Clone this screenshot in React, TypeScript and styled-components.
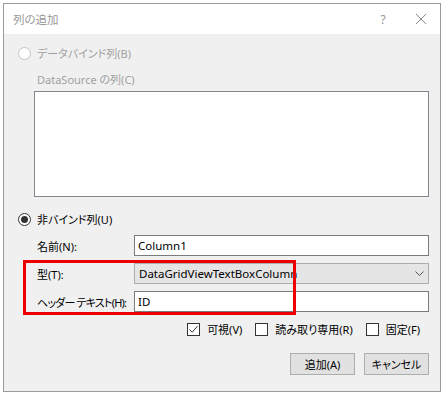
import React from 'react';
import styled, { createGlobalStyle } from 'styled-components';

const GlobalStyle = createGlobalStyle`
  html, body {
    margin: 0;
    padding: 0;
    background: #ffffff;
  }
  body {
    font-family: "Noto Sans", "Noto Sans CJK JP", sans-serif;
    font-size: 11px;
    font-feature-settings: "palt";
    color: #000;
  }
`;

const Screen = styled.div`
  width: 445px;
  height: 396px;
  padding: 3px 4px 4px 3px;
  box-sizing: border-box;
`;

const Window = styled.div`
  width: 438px;
  height: 389px;
  border: 1px solid #9a9a9a;
  box-sizing: border-box;
  display: flex;
  flex-direction: column;
  background: #f0f0f0;
`;

const TitleBar = styled.div`
  height: 30px;
  background: #ffffff;
  display: flex;
  align-items: center;
  padding-left: 9px;
  flex-shrink: 0;
`;

const Title = styled.div`
  flex: 1;
  color: #999999;
  font-size: 11.5px;
`;

const TitleButton = styled.div`
  width: 38px;
  height: 30px;
  display: flex;
  align-items: center;
  justify-content: center;
  color: #999999;
  font-size: 12px;
`;

const Body = styled.div`
  flex: 1;
  padding: 9px 14px 0 14px;
  display: flex;
  flex-direction: column;
`;

const RadioRow = styled.label<{ $disabled?: boolean; $gap?: number }>`
  display: flex;
  align-items: center;
  gap: 6px;
  height: 20px;
  margin-top: ${(p) => p.$gap ?? 0}px;
  color: ${(p) => (p.$disabled ? '#a0a0a0' : '#000')};
`;

const Radio = styled.span<{ $checked?: boolean; $disabled?: boolean }>`
  width: 13px;
  height: 13px;
  border-radius: 50%;
  box-sizing: border-box;
  border: 1px solid ${(p) => (p.$disabled ? '#c4c4c4' : '#333')};
  background: #fff;
  display: flex;
  align-items: center;
  justify-content: center;
  &::after {
    content: '';
    display: ${(p) => (p.$checked ? 'block' : 'none')};
    width: 7px;
    height: 7px;
    border-radius: 50%;
    background: #333;
  }
`;

const Indented = styled.div`
  padding-left: 19px;
  display: flex;
  flex-direction: column;
`;

const SubLabel = styled.div<{ $disabled?: boolean }>`
  height: 20px;
  display: flex;
  align-items: center;
  color: ${(p) => (p.$disabled ? '#a0a0a0' : '#000')};
  margin-top: 6px;
`;

const ListBox = styled.div`
  height: 106px;
  margin-right: -3px;
  margin-left: -3px;
  border: 1px solid #82878f;
  background: #fff;
  box-sizing: border-box;
  margin-top: 2px;
`;

const Form = styled.div`
  display: grid;
  grid-template-columns: 97px 1fr;
  row-gap: 7px;
  margin-right: -3px;
  margin-top: 6px;
`;

const HighlightGroup = styled.div`
  position: relative;
  display: grid;
  grid-template-columns: 97px 1fr;
  row-gap: 7px;
  grid-column: 1 / -1;
`;

const Highlight = styled.div`
  position: absolute;
  left: -14px;
  top: -3px;
  width: 273px;
  height: 55px;
  border: 3px solid #ee0000;
  box-sizing: border-box;
  pointer-events: none;
`;

const FieldLabel = styled.div<{ $tight?: boolean }>`
  height: 21px;
  display: flex;
  align-items: center;
  white-space: nowrap;
  letter-spacing: ${(p) => (p.$tight ? '-0.8px' : 'normal')};
`;

const TextBox = styled.div`
  height: 21px;
  border: 1px solid #7a7a7a;
  background: #fff;
  box-sizing: border-box;
  display: flex;
  align-items: center;
  padding-left: 3px;
  font-size: 11.5px;
`;

const Combo = styled.div`
  height: 21px;
  border: 1px solid #adadad;
  background: #e5e5e5;
  box-sizing: border-box;
  display: flex;
  align-items: center;
  padding-left: 4px;
  font-size: 11.5px;
`;

const ComboText = styled.span`
  flex: 1;
`;

const ComboArrow = styled.span`
  width: 18px;
  display: flex;
  align-items: center;
  justify-content: center;
`;

const CheckRow = styled.div`
  display: flex;
  justify-content: flex-end;
  align-items: center;
  gap: 13px;
  margin-top: 7px;
  margin-right: 6px;
  height: 20px;
`;

const CheckItem = styled.label`
  display: flex;
  align-items: center;
  gap: 7px;
`;

const Box = styled.span`
  width: 13px;
  height: 13px;
  border: 1px solid #333;
  background: #fff;
  box-sizing: border-box;
  display: flex;
  align-items: center;
  justify-content: center;
`;

const ButtonRow = styled.div`
  display: flex;
  justify-content: flex-end;
  gap: 9px;
  margin-top: 14px;
  margin-right: -3px;
`;

const Button = styled.button`
  width: 65px;
  height: 22px;
  border: 1px solid #adadad;
  background: #e1e1e1;
  font-family: inherit;
  font-feature-settings: "palt";
  font-size: 11px;
  color: #000;
  padding: 0;
`;

const Check = () => (
  <svg width="11" height="11" viewBox="0 0 11 11">
    <path d="M1.5 5.5 L4.2 8.2 L9.5 2.2" fill="none" stroke="#333" strokeWidth="1" />
  </svg>
);

const App = () => (
  <>
    <GlobalStyle />
    <Screen>
      <Window>
        <TitleBar>
          <Title>列の追加</Title>
          <TitleButton>?</TitleButton>
          <TitleButton>
            <svg width="12" height="12" viewBox="0 0 12 12">
              <path d="M1 1 L11 11 M11 1 L1 11" stroke="#888" strokeWidth="1" />
            </svg>
          </TitleButton>
        </TitleBar>
        <Body>
          <RadioRow $disabled>
            <Radio $disabled />
            データバインド列(B)
          </RadioRow>
          <Indented>
            <SubLabel $disabled>DataSource の列(C)</SubLabel>
            <ListBox />
          </Indented>
          <RadioRow $gap={12}>
            <Radio $checked />
            非バインド列(U)
          </RadioRow>
          <Indented>
            <Form>
              <FieldLabel>名前(N):</FieldLabel>
              <TextBox>Column1</TextBox>
              <HighlightGroup>
                <Highlight />
                <FieldLabel>型(T):</FieldLabel>
                <Combo>
                  <ComboText>DataGridViewTextBoxColumn</ComboText>
                  <ComboArrow>
                    <svg width="9" height="6" viewBox="0 0 9 6">
                      <path d="M0.5 0.5 L4.5 4.5 L8.5 0.5" fill="none" stroke="#555" strokeWidth="1" />
                    </svg>
                  </ComboArrow>
                </Combo>
                <FieldLabel $tight>ヘッダー テキスト(H):</FieldLabel>
                <TextBox>ID</TextBox>
              </HighlightGroup>
            </Form>
            <CheckRow>
              <CheckItem>
                <Box>
                  <Check />
                </Box>
                可視(V)
              </CheckItem>
              <CheckItem>
                <Box />
                読み取り専用(R)
              </CheckItem>
              <CheckItem>
                <Box />
                固定(F)
              </CheckItem>
            </CheckRow>
            <ButtonRow>
              <Button>追加(A)</Button>
              <Button>キャンセル</Button>
            </ButtonRow>
          </Indented>
        </Body>
      </Window>
    </Screen>
  </>
);

export default App;
